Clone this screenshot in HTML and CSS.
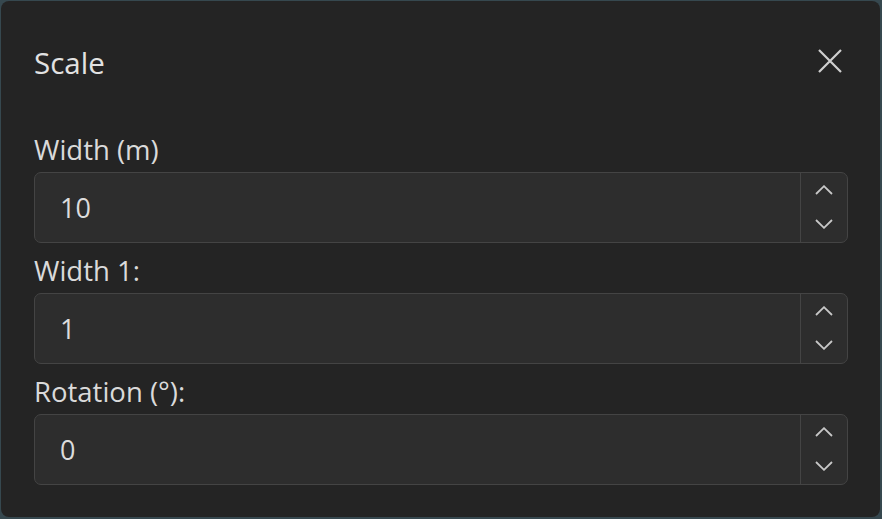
FILE: index.html
```html
<!DOCTYPE html>
<html lang="en">
<head>
<meta charset="utf-8">
<title>Scale</title>
<link rel="stylesheet" href="styles.css">
</head>
<body>
<div class="dialog">
  <div class="header">
    <div class="title">Scale</div>
    <button class="close" aria-label="Close">
      <svg width="24" height="24" viewBox="0 0 24 24"><path d="M1 1 L23 23 M23 1 L1 23" stroke="#cfcfcf" stroke-width="2.2" fill="none"/></svg>
    </button>
  </div>
  <div class="fields">
    <div class="field">
      <div class="label">Width (m)</div>
      <div class="numbox">
        <div class="value">10</div>
        <div class="spin">
          <svg class="chev" width="18" height="10" viewBox="0 0 18 10"><path d="M1 9 L9 1.2 L17 9" stroke="#c8c8c8" stroke-width="1.8" fill="none"/></svg>
          <svg class="chev" width="18" height="10" viewBox="0 0 18 10"><path d="M1 1 L9 8.8 L17 1" stroke="#c8c8c8" stroke-width="1.8" fill="none"/></svg>
        </div>
      </div>
    </div>
    <div class="field">
      <div class="label">Width 1:</div>
      <div class="numbox">
        <div class="value">1</div>
        <div class="spin">
          <svg class="chev" width="18" height="10" viewBox="0 0 18 10"><path d="M1 9 L9 1.2 L17 9" stroke="#c8c8c8" stroke-width="1.8" fill="none"/></svg>
          <svg class="chev" width="18" height="10" viewBox="0 0 18 10"><path d="M1 1 L9 8.8 L17 1" stroke="#c8c8c8" stroke-width="1.8" fill="none"/></svg>
        </div>
      </div>
    </div>
    <div class="field">
      <div class="label">Rotation (°):</div>
      <div class="numbox">
        <div class="value">0</div>
        <div class="spin">
          <svg class="chev" width="18" height="10" viewBox="0 0 18 10"><path d="M1 9 L9 1.2 L17 9" stroke="#c8c8c8" stroke-width="1.8" fill="none"/></svg>
          <svg class="chev" width="18" height="10" viewBox="0 0 18 10"><path d="M1 1 L9 8.8 L17 1" stroke="#c8c8c8" stroke-width="1.8" fill="none"/></svg>
        </div>
      </div>
    </div>
  </div>
</div>
</body>
</html>
```
FILE: styles.css
```css
html, body {
  margin: 0;
  padding: 0;
  width: 882px;
  height: 519px;
  overflow: hidden;
  background: #36484f;
}
body {
  padding: 1px 2px 2px 1px;
  box-sizing: border-box;
  font-family: "Open Sans", "Noto Sans", sans-serif;
}
.dialog {
  width: 879px;
  height: 516px;
  box-sizing: border-box;
  background: #242424;
  border-radius: 8px;
  padding: 42px 32px 0 33px;
}
.header {
  display: flex;
  align-items: center;
  justify-content: space-between;
  height: 40px;
}
.title {
  font-size: 29.5px;
  line-height: 40px;
  color: #e2e2e2;
}
.close {
  width: 40px;
  height: 40px;
  margin-top: -4px;
  margin-right: -2px;
  padding: 0;
  border: 0;
  background: transparent;
  display: flex;
  align-items: center;
  justify-content: center;
}
.fields {
  margin-top: 49px;
  display: flex;
  flex-direction: column;
  gap: 10px;
}
.field {
  display: flex;
  flex-direction: column;
  gap: 4px;
}
.label {
  font-size: 27.5px;
  line-height: 36px;
  color: #dadada;
}
.numbox {
  height: 71px;
  box-sizing: border-box;
  border: 1.5px solid #444444;
  border-radius: 7px;
  background: #2d2d2d;
  display: flex;
  align-items: stretch;
}
.value {
  flex: 1;
  display: flex;
  align-items: center;
  padding-left: 25px;
  font-size: 27px;
  color: #dcdcdc;
}
.spin {
  width: 46px;
  border-left: 1.5px solid #444444;
  display: flex;
  flex-direction: column;
  align-items: center;
  justify-content: space-between;
  padding: 12px 0 13px;
}
.chev {
  display: block;
}
```
